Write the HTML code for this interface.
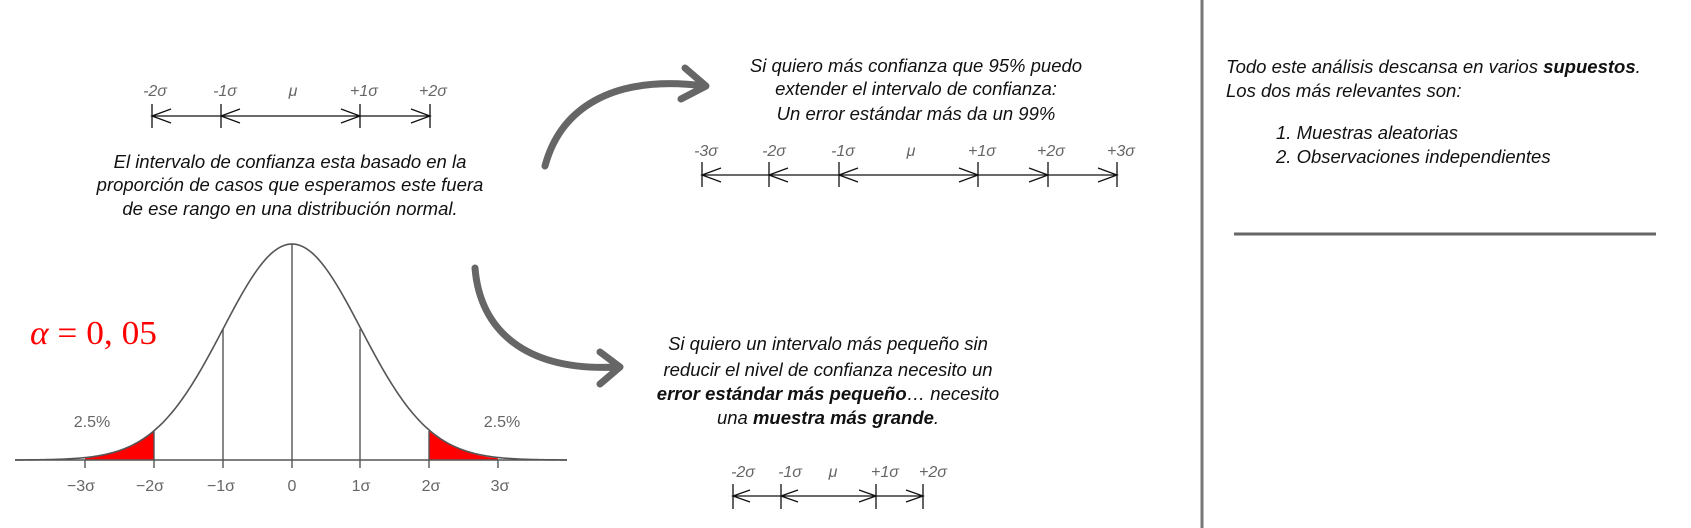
<!DOCTYPE html>
<html><head><meta charset="utf-8"><style>
html,body{margin:0;padding:0;background:#fff;}
svg{display:block;}
text{font-family:"Liberation Sans",sans-serif;}
.it{font-style:italic;fill:#111;font-size:18.5px;}
.lb{font-style:italic;fill:#666;font-size:16px;}
.ax{fill:#666;font-size:16px;}
</style></head><body>
<svg width="1691" height="528" viewBox="0 0 1691 528" xmlns="http://www.w3.org/2000/svg">
<line x1="1202" y1="0" x2="1202" y2="528" stroke="#777" stroke-width="3"/>
<line x1="1234" y1="234" x2="1656" y2="234" stroke="#666" stroke-width="3"/>
<text class="it" x="1226" y="73">Todo este análisis descansa en varios <tspan font-weight="bold" font-style="italic">supuestos</tspan>.</text>
<text class="it" x="1226" y="97">Los dos más relevantes son:</text>
<text class="it" x="1276" y="139">1. Muestras aleatorias</text>
<text class="it" x="1276" y="163">2. Observaciones independientes</text>

<g stroke="#111" stroke-width="1.3" fill="none">
<line x1="152" y1="116" x2="430" y2="116"/>
<line x1="152" y1="104" x2="152" y2="128"/><line x1="221" y1="104" x2="221" y2="128"/>
<line x1="360" y1="104" x2="360" y2="128"/><line x1="430" y1="104" x2="430" y2="128"/>
<polyline points="171,109 152,116 171,123"/><polyline points="240,109 221,116 240,123"/>
<polyline points="341,109 360,116 341,123"/><polyline points="411,109 430,116 411,123"/>
</g>
<g text-anchor="middle">
<text class="lb" x="155" y="96">-2σ</text><text class="lb" x="225" y="96">-1σ</text><text class="lb" x="293" y="96">μ</text><text class="lb" x="364" y="96">+1σ</text><text class="lb" x="433" y="96">+2σ</text>
</g>
<g text-anchor="middle">
<text class="it" x="290" y="168">El intervalo de confianza esta basado en la</text>
<text class="it" x="290" y="191">proporción de casos que esperamos este fuera</text>
<text class="it" x="290" y="215">de ese rango en una distribución normal.</text>
</g>

<path d="M85,460 L85,458.3 C110,456 135,447 154,431 L154,460 Z" fill="#f00"/>
<path d="M429,460 L429,431 C448,447 473,456 498,458.3 L498,460 Z" fill="#f00"/>
<path id="bell" d="" fill="none" stroke="#555" stroke-width="1.6"/>
<g stroke="#555" stroke-width="1.4">
<line x1="15" y1="460" x2="567" y2="460"/>
<line x1="223" y1="329" x2="223" y2="460"/><line x1="292" y1="244" x2="292" y2="460"/><line x1="360" y1="329" x2="360" y2="460"/>
<line x1="154" y1="431" x2="154" y2="460"/><line x1="429" y1="431" x2="429" y2="460"/>
<line x1="85" y1="460" x2="85" y2="468"/><line x1="154" y1="460" x2="154" y2="468"/><line x1="223" y1="460" x2="223" y2="468"/><line x1="292" y1="460" x2="292" y2="468"/><line x1="360" y1="460" x2="360" y2="468"/><line x1="429" y1="460" x2="429" y2="468"/><line x1="498" y1="460" x2="498" y2="468"/>
</g>
<g text-anchor="middle">
<text class="ax" x="81" y="491">−3σ</text><text class="ax" x="150" y="491">−2σ</text><text class="ax" x="221" y="491">−1σ</text><text class="ax" x="292" y="491">0</text><text class="ax" x="361" y="491">1σ</text><text class="ax" x="431" y="491">2σ</text><text class="ax" x="500" y="491">3σ</text>
<text class="ax" x="92" y="427">2.5%</text><text class="ax" x="502" y="427">2.5%</text>
</g>
<text x="30" y="344" fill="#f00" style="font-family:'Liberation Serif',serif;font-size:34px;" textLength="127" lengthAdjust="spacingAndGlyphs"><tspan font-style="italic">α</tspan> = 0, 05</text>

<g stroke="#666" stroke-width="7" fill="none" stroke-linecap="round" stroke-linejoin="round">
<path d="M545,166 C560,110 610,74 705,86"/>
<polyline points="685,68 706,86 681,99"/>
<path d="M475,268 C480,330 525,372 618,367"/>
<polyline points="600,352 620,367 600,384"/>
</g>

<g text-anchor="middle">
<text class="it" x="916" y="72">Si quiero más confianza que 95% puedo</text>
<text class="it" x="916" y="95">extender el intervalo de confianza:</text>
<text class="it" x="916" y="120">Un error estándar más da un 99%</text>
</g>
<g stroke="#111" stroke-width="1.3" fill="none">
<line x1="702" y1="175" x2="1117" y2="175"/>
<line x1="702" y1="162" x2="702" y2="187"/><line x1="769" y1="162" x2="769" y2="187"/><line x1="839" y1="162" x2="839" y2="187"/>
<line x1="978" y1="162" x2="978" y2="187"/><line x1="1048" y1="162" x2="1048" y2="187"/><line x1="1117" y1="162" x2="1117" y2="187"/>
<polyline points="721,168 702,175 721,182"/><polyline points="788,168 769,175 788,182"/><polyline points="858,168 839,175 858,182"/>
<polyline points="959,168 978,175 959,182"/><polyline points="1029,168 1048,175 1029,182"/><polyline points="1098,168 1117,175 1098,182"/>
</g>
<g text-anchor="middle">
<text class="lb" x="706" y="156">-3σ</text><text class="lb" x="774" y="156">-2σ</text><text class="lb" x="843" y="156">-1σ</text><text class="lb" x="911" y="156">μ</text><text class="lb" x="982" y="156">+1σ</text><text class="lb" x="1051" y="156">+2σ</text><text class="lb" x="1121" y="156">+3σ</text>
</g>

<g text-anchor="middle">
<text class="it" x="828" y="350">Si quiero un intervalo más pequeño sin</text>
<text class="it" x="828" y="376">reducir el nivel de confianza necesito un</text>
<text class="it" x="828" y="400"><tspan font-weight="bold">error estándar más pequeño</tspan>… necesito</text>
<text class="it" x="828" y="424">una <tspan font-weight="bold">muestra más grande</tspan>.</text>
</g>
<g stroke="#111" stroke-width="1.3" fill="none">
<line x1="733" y1="496" x2="923" y2="496"/>
<line x1="733" y1="484" x2="733" y2="509"/><line x1="781" y1="484" x2="781" y2="509"/><line x1="876" y1="484" x2="876" y2="509"/><line x1="923" y1="484" x2="923" y2="509"/>
<polyline points="750,490 733,496 750,502"/><polyline points="798,490 781,496 798,502"/>
<polyline points="859,490 876,496 859,502"/><polyline points="906,490 923,496 906,502"/>
</g>
<g text-anchor="middle">
<text class="lb" x="743" y="477">-2σ</text><text class="lb" x="790" y="477">-1σ</text><text class="lb" x="833" y="477">μ</text><text class="lb" x="885" y="477">+1σ</text><text class="lb" x="933" y="477">+2σ</text>
</g>
</svg>
<script>
(function(){var d="";for(var x=15;x<=567;x+=2){var z=(x-292)/69;var y=460-216*Math.exp(-z*z/2);d+=(x==15?"M":"L")+x+","+y.toFixed(2);}document.getElementById("bell").setAttribute("d",d);})();
</script>
</body></html>
